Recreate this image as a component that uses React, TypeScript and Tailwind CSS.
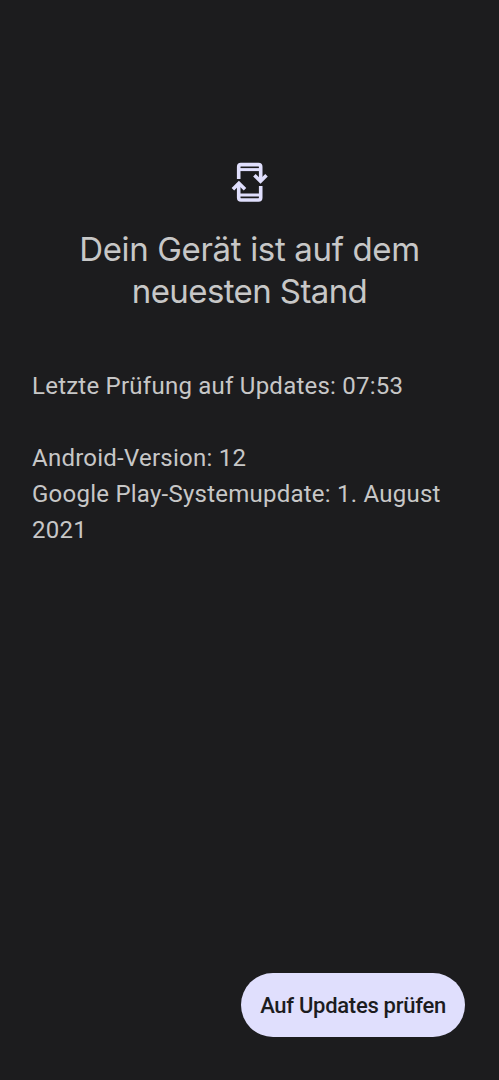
function SystemUpdateIcon() {
  return (
    <svg className="h-10 w-10" viewBox="0 0 40 40" fill="none" stroke="#e0dffd" strokeWidth="3.6">
      {/* Phone, upper half */}
      <path d="M8.7 17V4.8Q8.7 2.6 10.9 2.6H28.5Q30.7 2.6 30.7 4.8V19" />
      <path d="M8.7 7.6H30.7" strokeWidth="3" />
      {/* Phone, lower half */}
      <path d="M30.7 24V35.8Q30.7 38 28.5 38H10.9Q8.7 38 8.7 35.8V21" />
      <path d="M8.7 33H30.7" strokeWidth="3" />
      <path d="M24.4 13.2L30.5 19.2L36.5 13.2" />
      <path d="M2.9 27.2L8.9 21.2L15 27.2" />
    </svg>
  );
}

export default function App() {
  return (
    <div className="flex min-h-screen flex-col bg-[#1c1c1e] px-8 pt-[162px] pb-[43px] font-['Roboto',sans-serif] text-[#c7c7c7]">
      {/* Header */}
      <header className="flex flex-col items-center">
        <SystemUpdateIcon />
        <h1 className="mt-[26px] text-center font-['Inter',sans-serif] text-[33px] leading-[42px]">
          <span className="block tracking-[-0.34px]">Dein Gerät ist auf dem</span>
          <span className="block tracking-[-0.6px]">neuesten Stand</span>
        </h1>
      </header>

      {/* Update info */}
      <main className="mt-[56px] flex-1 text-2xl leading-9 tracking-[0.24px]">
        <p>Letzte Prüfung auf Updates: 07:53</p>
        <p className="mt-9">Android-Version: 12</p>
        <p>Google Play-Systemupdate: 1. August 2021</p>
      </main>

      {/* Action */}
      <footer className="mr-[2px] flex justify-end">
        <button className="h-16 w-56 rounded-full bg-[#e0dffd] pt-px text-[22px] font-medium tracking-[-0.28px] text-[#1c1c1e]">
          Auf Updates prüfen
        </button>
      </footer>
    </div>
  );
}
